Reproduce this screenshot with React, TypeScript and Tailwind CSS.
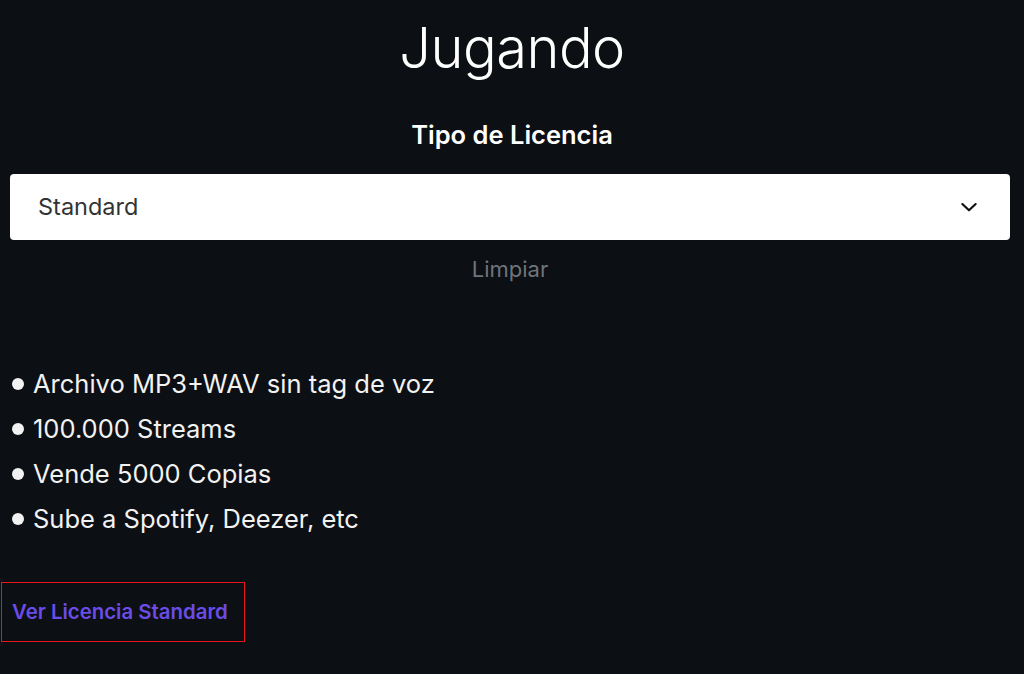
import React, { useState } from "react";

const opciones = ["Standard", "Premium", "Exclusiva"];

const beneficios = [
  "Archivo MP3+WAV sin tag de voz",
  "100.000 Streams",
  "Vende 5000 Copias",
  "Sube a Spotify, Deezer, etc",
];

export default function App() {
  const [licencia, setLicencia] = useState("Standard");

  return (
    <div
      className="min-h-[674px] w-full bg-[#0c0f13] text-white"
      style={{ fontFamily: "Inter, 'Noto Sans', sans-serif" }}
    >
      <div className="flex flex-col items-center pt-[12px]">
        <h1 className="text-[56px] font-light leading-[72px] tracking-[-0.5px]">Jugando</h1>
        <h2 className="mt-[36px] text-[25.5px] font-semibold leading-[30px]">Tipo de Licencia</h2>
      </div>

      <div className="w-[1000px] ml-[10px] mt-[24px]">
        <div className="relative">
          <select
            value={licencia}
            onChange={(e) => setLicencia(e.target.value)}
            className="h-[66px] w-full appearance-none rounded-[4px] bg-white pl-[28px] text-[23.5px] text-[#333333] outline-none"
          >
            {opciones.map((o) => (
              <option key={o} value={o}>
                {o}
              </option>
            ))}
          </select>
          <svg
            className="pointer-events-none absolute right-[31px] top-1/2 -translate-y-1/2"
            width="20"
            height="20"
            viewBox="0 0 24 24"
            fill="none"
            stroke="#111"
            strokeWidth="2.6"
            strokeLinecap="round"
            strokeLinejoin="round"
          >
            <path d="M4 8.5l8 7.5 8-7.5" />
          </svg>
        </div>
        <div className="mt-[16px] flex justify-center">
          <button className="text-[22px] leading-[26px] text-[#6f747b]" onClick={() => setLicencia("")}>
            Limpiar
          </button>
        </div>
      </div>

      <ul className="mt-[87px] flex flex-col gap-[16px] px-[12px]">
        {beneficios.map((b) => (
          <li key={b} className="flex items-center gap-[9px] text-[25.5px] leading-[29px] text-[#f2f2f2]">
            <span className="h-[12px] w-[12px] rounded-full bg-[#f2f2f2]" />
            {b}
          </li>
        ))}
      </ul>

      <div className="mt-[49px] px-[1px]">
        <a
          href="#"
          className="inline-flex h-[60px] w-[244px] items-center border-[1.5px] border-[#e8161b] pl-[10px] text-[20.4px] font-semibold text-[#6a4de6]"
        >
          Ver Licencia {licencia}
        </a>
      </div>
    </div>
  );
}
